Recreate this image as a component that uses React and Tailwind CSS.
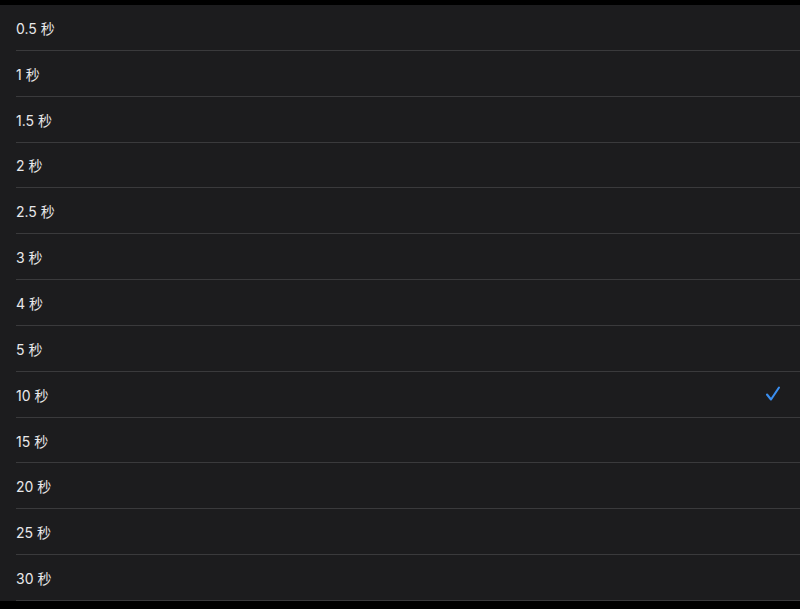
const OPTIONS = ["0.5", "1", "1.5", "2", "2.5", "3", "4", "5", "10", "15", "20", "25", "30"];

export default function App() {
  const selected = "10";

  return (
    <div
      className="w-[800px] h-[609px] bg-black pt-[5px] overflow-hidden"
      style={{ fontFamily: '"Inter", "Noto Sans CJK SC", sans-serif' }}
    >
      <ul className="bg-[#1c1c1e]">
        {OPTIONS.map((o) => (
          <li key={o} className="pl-4 h-[45.85px]">
            <div className="h-full flex items-center pt-[2px] pr-5 border-b border-[#3a3a3c] text-[14px] text-[#e8e8ea]">
              <span className="flex-1">{o} 秒</span>
              {o === selected && (
                <svg width="16" height="16" viewBox="0 0 16 16" className="mr-[-1px] mb-[2px]">
                  <polyline
                    points="2,8.5 6,13.5 14,1.5"
                    fill="none"
                    stroke="#3a8ef0"
                    strokeWidth="2.1"
                    strokeLinecap="round"
                    strokeLinejoin="round"
                  />
                </svg>
              )}
            </div>
          </li>
        ))}
      </ul>
    </div>
  );
}
